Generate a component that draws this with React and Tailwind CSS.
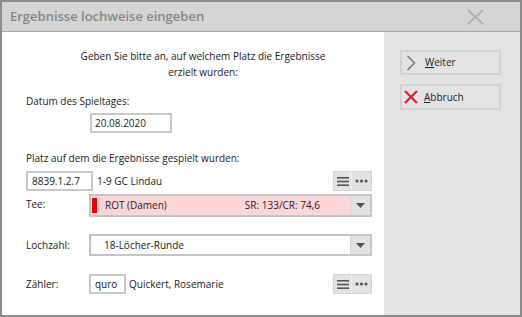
import React from "react";

const font = { fontFamily: "'Open Sans', 'Liberation Sans', sans-serif" };

const ListIcons = () => (
  <div className="flex h-[20px] border border-[#d4d4d4] bg-[#e2e2e2]">
    <div className="flex w-[18px] items-center justify-center border-r border-[#f0f0f0]">
      <svg width="12" height="11" viewBox="0 0 12 11">
        <rect x="0" y="1" width="12" height="1.6" fill="#555" />
        <rect x="0" y="4.7" width="12" height="1.6" fill="#555" />
        <rect x="0" y="8.4" width="12" height="1.6" fill="#555" />
      </svg>
    </div>
    <div className="flex w-[19px] items-center justify-center">
      <svg width="13" height="4" viewBox="0 0 13 4">
        <circle cx="2" cy="2" r="1.6" fill="#555" />
        <circle cx="6.5" cy="2" r="1.6" fill="#555" />
        <circle cx="11" cy="2" r="1.6" fill="#555" />
      </svg>
    </div>
  </div>
);

const DropButton = () => (
  <div className="flex w-[20px] items-center justify-center self-stretch bg-[#e2e2e2] border-l border-[#d4d4d4]">
    <svg width="9" height="5" viewBox="0 0 9 5">
      <path d="M0 0 L9 0 L4.5 5 Z" fill="#555" />
    </svg>
  </div>
);

export default function App() {
  return (
    <div
      className="w-[522px] h-[317px] border-2 border-[#8c8c8c] flex flex-col bg-white text-[10px] text-[#222]"
      style={font}
    >
      {/* Title bar */}
      <div className="h-[30px] shrink-0 flex items-center justify-between bg-[#d5d5d5] border-b border-[#a6a6a6] pl-[8px] pr-[36px]">
        <span className="text-[13px] font-semibold text-[#858585]">
          Ergebnisse lochweise eingeben
        </span>
        <svg width="17" height="16" viewBox="0 0 17 16">
          <path d="M1 1 L16 15 M16 1 L1 15" stroke="#b0b0b0" strokeWidth="2" />
        </svg>
      </div>

      <div className="flex flex-1">
        {/* Left content */}
        <div className="w-[382px] pl-[24px] pr-[12px] pt-[16px] flex flex-col">
          <div className="text-center leading-[16px] pl-[8px]">
            <div>Geben Sie bitte an, auf welchem Platz die Ergebnisse</div>
            <div>erzielt wurden:</div>
          </div>

          <div className="mt-[13px] leading-[16px]">Datum des Spieltages:</div>
          <div className="mt-[4px] ml-[64px] w-[82px] h-[20px] border-2 border-[#c8c8c8] flex items-center pl-[3px] leading-none">
            20.08.2020
          </div>

          <div className="mt-[17px] leading-[16px]">
            Platz auf dem die Ergebnisse gespielt wurden:
          </div>
          <div className="mt-[5px] flex items-center">
            <div className="w-[67px] h-[20px] border-2 border-[#c8c8c8] flex items-center pl-[4px] leading-none">
              8839.1.2.7
            </div>
            <span className="ml-[4px]">1-9 GC Lindau</span>
            <div className="ml-auto">
              <ListIcons />
            </div>
          </div>

          <div className="mt-[3px] flex items-start">
            <span className="w-[63px] leading-[16px] pt-[2px]">Tee:</span>
            <div className="flex-1 h-[23px] border-2 border-[#c4c4c4] bg-[#ffd6d6] flex items-center">
              <div className="ml-[1px] w-[5px] h-[15px] bg-[#ee0000]" />
              <span className="ml-[8px]">ROT (Damen)</span>
              <span className="ml-auto mr-[30px]">SR: 133/CR: 74,6</span>
              <DropButton />
            </div>
          </div>

          <div className="mt-[17px] flex items-center">
            <span className="w-[63px]">Lochzahl:</span>
            <div className="flex-1 h-[22px] border-2 border-[#c4c4c4] bg-white flex items-center">
              <span className="ml-[13px]">18-Löcher-Runde</span>
              <span className="ml-auto" />
              <DropButton />
            </div>
          </div>

          <div className="mt-[18px] flex items-center">
            <span className="w-[63px]">Zähler:</span>
            <div className="w-[37px] h-[20px] border-2 border-[#c8c8c8] flex items-center pl-[4px] leading-none">
              quro
            </div>
            <span className="ml-[3px]">Quickert, Rosemarie</span>
            <div className="ml-auto">
              <ListIcons />
            </div>
          </div>
        </div>

        {/* Right panel */}
        <div className="flex-1 bg-[#e3e3e3] pt-[18px] pl-[16px] flex flex-col gap-[9px]">
          <div className="w-[101px] h-[25px] border-2 border-[#d2d2d2] flex items-center">
            <svg width="10" height="16" viewBox="0 0 10 16" className="ml-[4px]">
              <path d="M1.5 1 L8.5 8 L1.5 15" fill="none" stroke="#6a6a6a" strokeWidth="1.3" />
            </svg>
            <span className="ml-[9px]">
              <span className="underline">W</span>eiter
            </span>
          </div>
          <div className="w-[101px] h-[26px] border-2 border-[#d2d2d2] flex items-center">
            <svg width="14" height="14" viewBox="0 0 14 14" className="ml-[2px]">
              <path d="M1 1 L13 13 M13 1 L1 13" stroke="#e02020" strokeWidth="2.2" />
            </svg>
            <span className="ml-[6px]">
              <span className="underline">A</span>bbruch
            </span>
          </div>
        </div>
      </div>
    </div>
  );
}
